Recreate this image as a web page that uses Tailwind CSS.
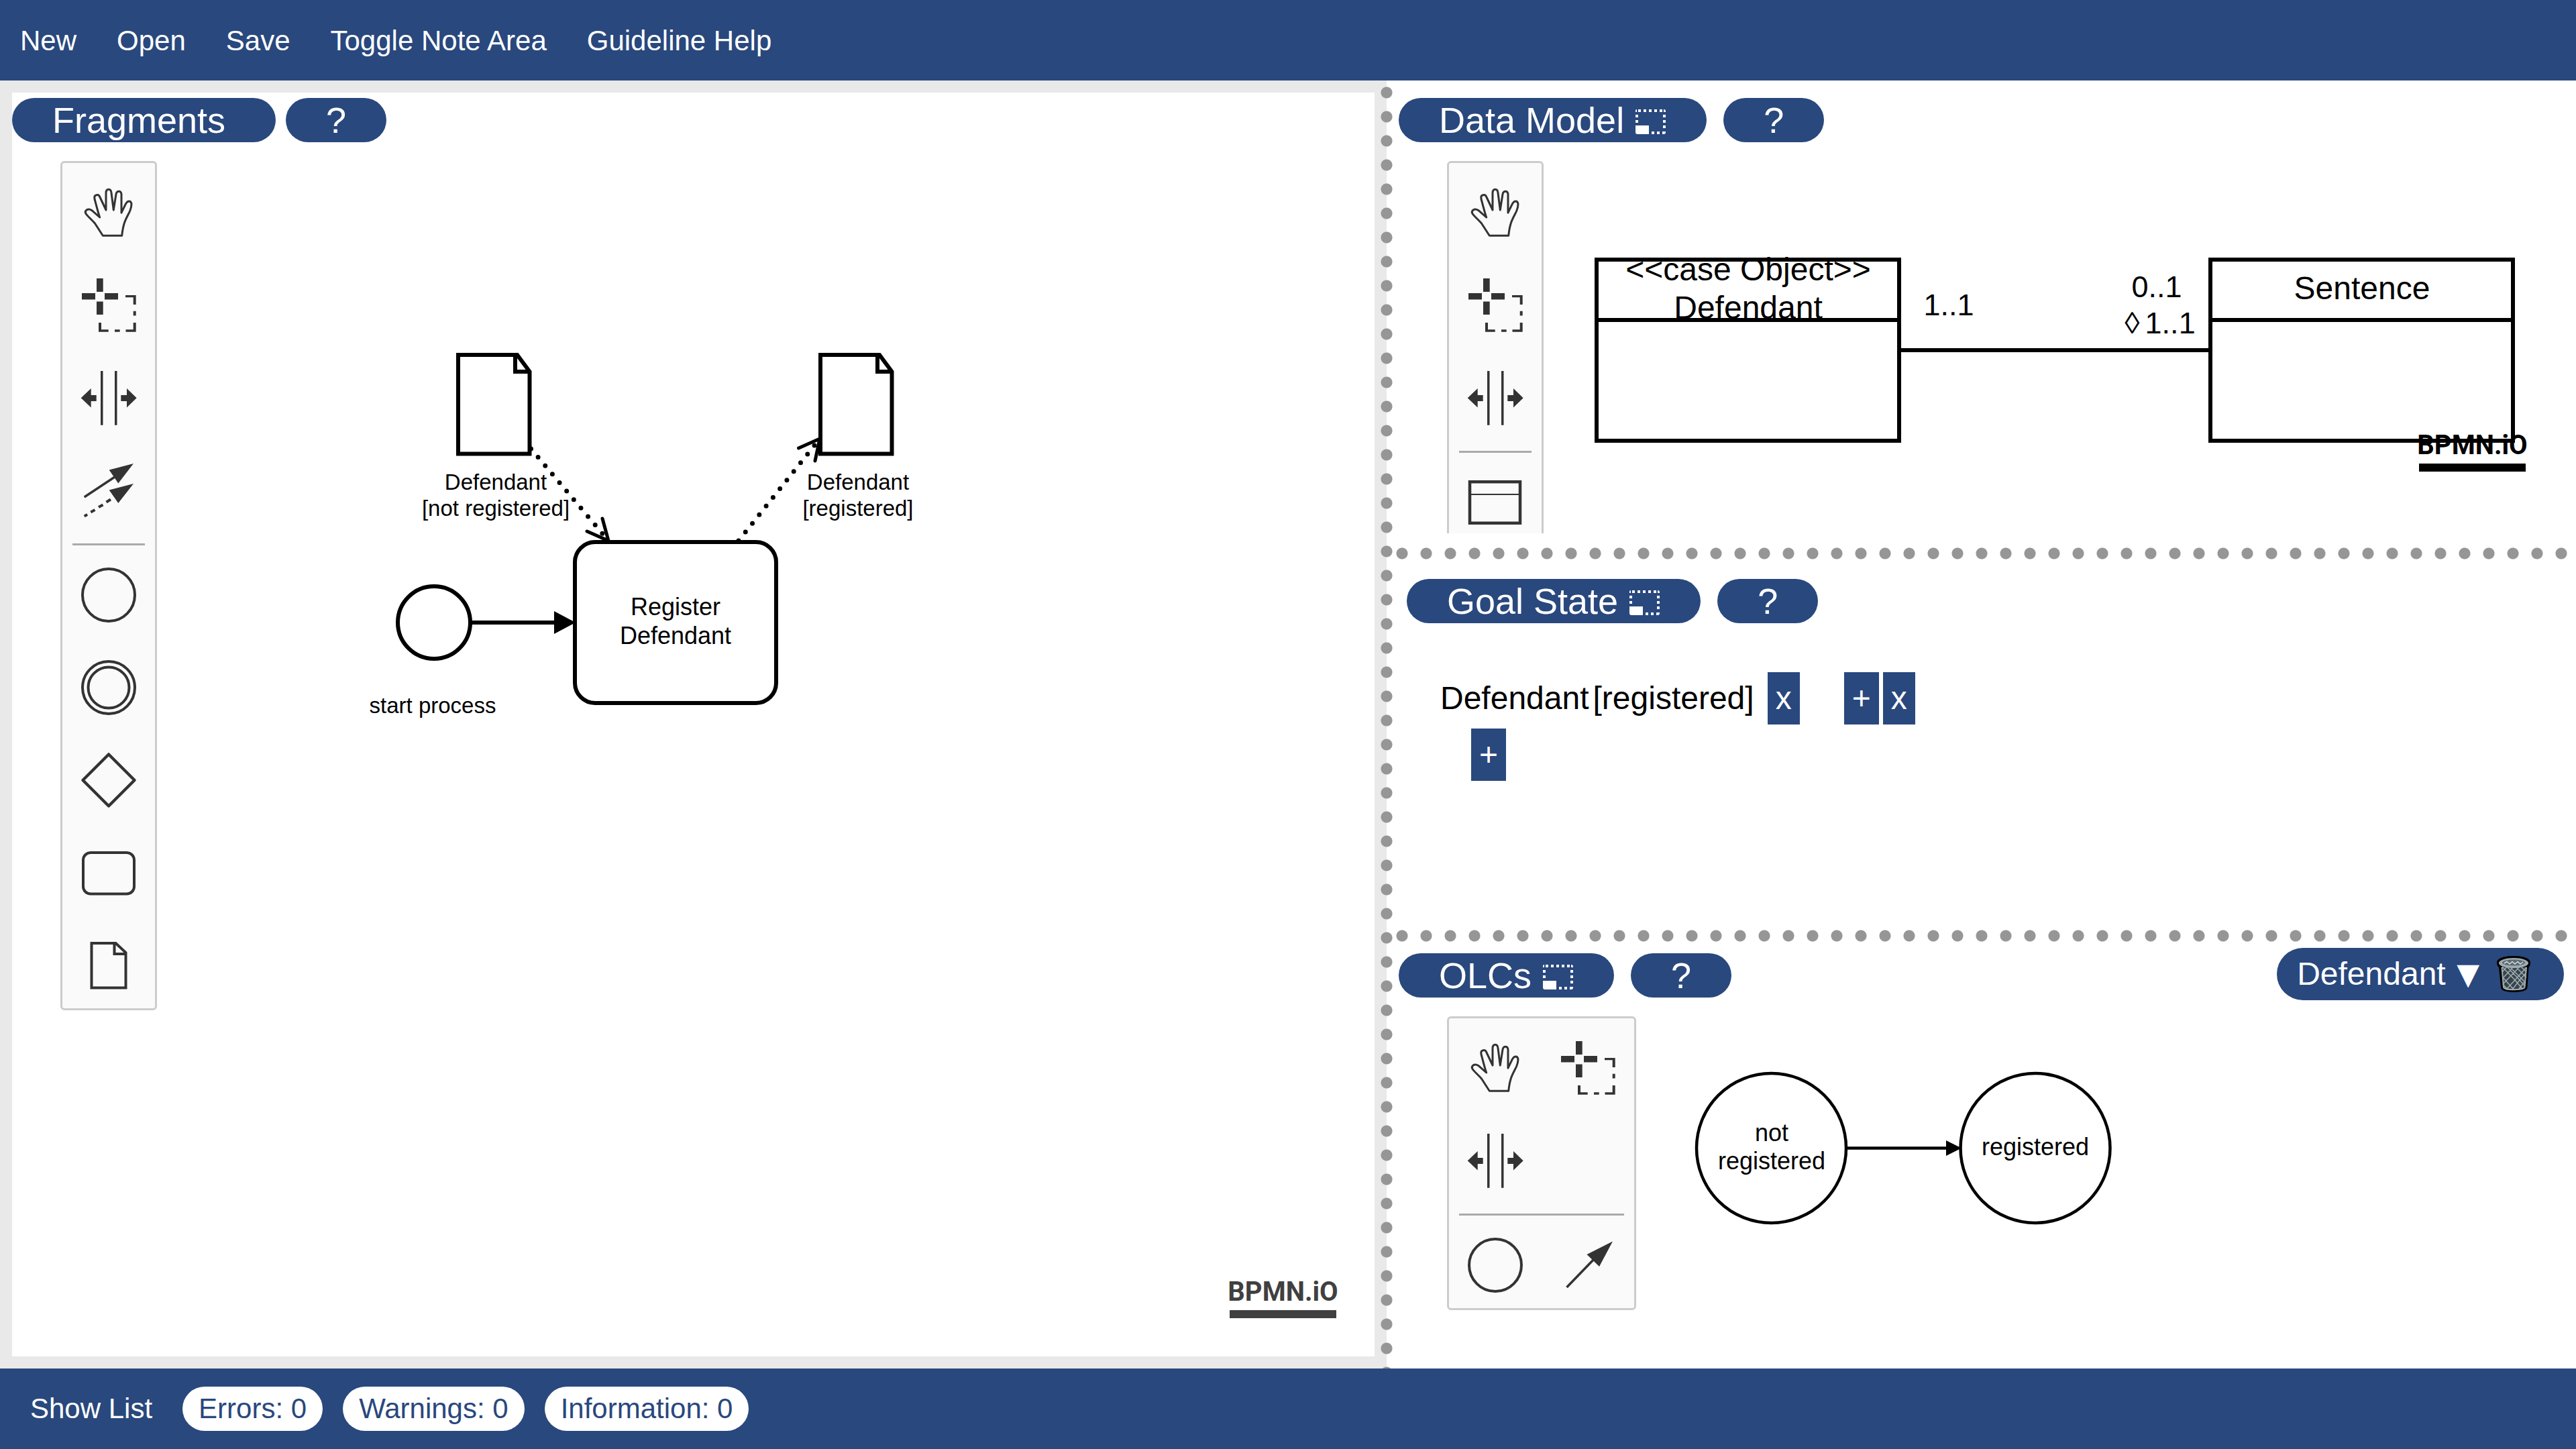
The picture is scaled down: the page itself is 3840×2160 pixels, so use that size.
<!DOCTYPE html>
<html lang="en">
<head>
<meta charset="utf-8">
<meta name="viewport" content="width=device-width, initial-scale=1">
<title>Fragments Modeler</title>
<script src="https://cdn.jsdelivr.net/npm/@tailwindcss/browser@4"></script>
</head>
<body class="min-h-screen flex flex-col bg-white text-black font-['Liberation_Sans',Arial,sans-serif] text-[48px]">

<!-- Shared icon shapes -->
<svg class="hidden" aria-hidden="true">
  <defs>
    <symbol id="i-hand" viewBox="0 0 138 138">
      <path fill="none" stroke="#333" stroke-width="3" stroke-linejoin="round" d="M60.3 108.3H88.7C89.5 101 90.5 95 92.5 89C95 82 98.5 76.500 100.700 71.500C102.500 67 103 64 103 61.200C102.500 55.500 97 55.500 94.300 61.200L88 74.200V46.500C87.500 40.800 81 40.800 80 46.500L76.300 70L73 44.500C72.500 37.500 65.300 37.500 65 44.500V70L56 51C54 45.500 46.500 47 48 53.500C49.500 59 53 73 55.700 81L43.700 70.400C37.500 66.500 32.500 71.500 35 75.500C38 80 44 84.500 48.500 90Z"/>
    </symbol>
    <symbol id="i-lasso" viewBox="0 0 138 138">
      <path fill="#333" d="M29 56H49V65.500H29ZM63 56H83V65.500H63ZM51 34H60.700V54H51ZM51 68.400H60.700V88H51ZM94 59H109.700V73H105.700V62.300H94ZM105.700 82.700H109.700V89.500H105.700ZM105.700 100H109.700V113.800H94.500V110.300H105.700ZM78 110.300H85.700V113.800H78ZM54 100H58V110.300H68.700V113.800H54Z"/>
    </symbol>
    <symbol id="i-space" viewBox="0 0 138 138">
      <path fill="#333" d="M57 34H60.500V114.700H57ZM78 34H81.500V114.700H78ZM27.700 74.300L42.700 60V70H50.700V79H42.700V88.600ZM110.700 74.300L96 60V70H87.300V79H96V88.600Z"/>
    </symbol>
    <symbol id="i-connect" viewBox="0 0 138 138">
      <path fill="none" stroke="#333" stroke-width="3.500" d="M32.700 84L78 54"/>
      <path fill="none" stroke="#333" stroke-width="4" d="M32.700 112.500L37.200 110M42.300 106.500L48.500 103M54 99L60.500 95.500M65.500 91.500L72 87.500"/>
      <path fill="#333" d="M69.700 43.600L106 34L83.300 63.400ZM69.700 73.600L106 64L83.300 93Z"/>
    </symbol>
    <symbol id="i-circle" viewBox="0 0 138 138">
      <circle cx="69" cy="74" r="39" fill="none" stroke="#333" stroke-width="4"/>
    </symbol>
    <symbol id="i-double" viewBox="0 0 138 138">
      <g fill="none" stroke="#333" stroke-width="4"><circle cx="69" cy="74" r="39"/><circle cx="69" cy="74" r="30.500"/></g>
    </symbol>
    <symbol id="i-gateway" viewBox="0 0 138 138">
      <path fill="none" stroke="#333" stroke-width="4.500" stroke-linejoin="round" d="M69 35.500L107.500 74L69 112.500L30.500 74Z"/>
    </symbol>
    <symbol id="i-task" viewBox="0 0 138 138">
      <rect x="31" y="44" width="76" height="61.500" rx="11" fill="none" stroke="#333" stroke-width="4"/>
    </symbol>
    <symbol id="i-data" viewBox="0 0 138 138">
      <path fill="none" stroke="#333" stroke-width="4" d="M43.500 41H79.500L94.500 55V107.500H43.500ZM77.500 41V57H94.500"/>
    </symbol>
    <symbol id="i-class" viewBox="0 0 138 138">
      <path fill="none" stroke="#333" stroke-width="4.500" d="M31 43.300H106V104.700H31Z"/>
      <path stroke="#333" stroke-width="2" d="M31 62H106"/>
    </symbol>
    <symbol id="i-arrow" viewBox="0 0 138 138">
      <path stroke="#333" stroke-width="3.500" d="M37.500 107L80 63"/>
      <path fill="#333" d="M67.500 58L106 38.400L86 76Z"/>
    </symbol>
    <symbol id="i-resize" viewBox="0 0 48 37">
      <path fill="none" stroke="#fff" stroke-width="4" stroke-dasharray="4 4" d="M6 2H44"/>
      <path fill="#fff" d="M2 2Q2 0 4 0V4H2ZM44 0Q47 0 47 3V4H44ZM2 8H6V12H2ZM2 16H6V20H2ZM43 8H47V12H43ZM43 16H47V20H43ZM43 24H47V28H43ZM2 24H22V37H5Q2 37 2 34ZM26 33H30V37H26ZM34 33H38V37H34ZM42 33H47V34Q47 37 44 37H42Z"/>
    </symbol>
  </defs>
</svg>

<header class="h-[120px] shrink-0 bg-[#29487d] text-white text-[42px]">
  <nav class="h-full flex items-center">
    <button class="px-[30px]">New</button>
    <button class="px-[30px]">Open</button>
    <button class="px-[30px]">Save</button>
    <button class="px-[30px]">Toggle Note Area</button>
    <button class="px-[30px]">Guideline Help</button>
  </nav>
</header>

<main class="flex-1 grid grid-cols-[2067fr_1773fr]">
  <!-- Fragments -->
  <section class="min-w-0 bg-[#e9e9e9] p-[18px] flex">
    <div class="relative flex-1 bg-white pt-2 flex flex-col items-start">
      <svg class="absolute inset-0 size-full" role="img" aria-label="Fragments diagram">
        <g transform="translate(-18 -138)" fill="none" stroke="#000" stroke-width="6">
          <path d="M683 529H771L789.500 554V676.500H683ZM768 529V554H789.500"/>
          <path d="M1223 529H1311L1329.500 554V676.500H1223ZM1308 529V554H1329.500"/>
          <g stroke-linecap="round">
            <path stroke-width="7" stroke-dasharray="0 16.500" d="M791.500 669L907 806"/>
            <path stroke-width="7" stroke-dasharray="0 16.500" d="M1101 806L1222 654"/>
            <path stroke-width="5" d="M898 773L907 806L875 792M1190.500 668L1222 654L1215 687"/>
          </g>
          <circle cx="647" cy="928" r="54" fill="#fff"/>
          <rect x="857" y="808" width="300" height="240" rx="30" fill="#fff"/>
          <path d="M702 928H830"/>
          <path fill="#000" stroke="none" d="M826 911L858 928L826 945Z"/>
          <g fill="#000" stroke="none" text-anchor="middle" font-size="33">
            <text x="739" y="730">Defendant</text>
            <text x="739" y="769">[not registered]</text>
            <text x="1279" y="730">Defendant</text>
            <text x="1279" y="769">[registered]</text>
            <text x="645" y="1063">start process</text>
            <text x="1007" y="917" font-size="36">Register</text>
            <text x="1007" y="960" font-size="36">Defendant</text>
          </g>
        </g>
      </svg>
      <div class="relative flex gap-[15px] text-[54px] leading-[66px] text-white">
        <h2 class="h-[66px] rounded-full bg-[#29487d] pl-[60px] pr-[75px]">Fragments</h2>
        <button class="w-[150px] h-[66px] rounded-full bg-[#29487d]">?</button>
      </div>
      <div class="relative mt-7 ml-[72px] w-36 rounded-md border-3 border-[#ccc] bg-[#fafafa]">
        <button class="block size-[138px]" aria-label="Hand tool"><svg class="size-full"><use href="#i-hand"/></svg></button>
        <button class="block size-[138px]" aria-label="Lasso tool"><svg class="size-full"><use href="#i-lasso"/></svg></button>
        <button class="block size-[138px]" aria-label="Space tool"><svg class="size-full"><use href="#i-space"/></svg></button>
        <button class="block size-[138px]" aria-label="Connect tool"><svg class="size-full"><use href="#i-connect"/></svg></button>
        <hr class="mx-[15px] h-[18px] border-t-0 border-b-3 border-[#aaa]">
        <button class="block size-[138px]" aria-label="Create start event"><svg class="size-full"><use href="#i-circle"/></svg></button>
        <button class="block size-[138px]" aria-label="Create intermediate event"><svg class="size-full"><use href="#i-double"/></svg></button>
        <button class="block size-[138px]" aria-label="Create gateway"><svg class="size-full"><use href="#i-gateway"/></svg></button>
        <button class="block size-[138px]" aria-label="Create task"><svg class="size-full"><use href="#i-task"/></svg></button>
        <button class="block size-[138px]" aria-label="Create data object"><svg class="size-full"><use href="#i-data"/></svg></button>
      </div>
      <a href="#bpmn" class="absolute right-[57px] bottom-[57px] w-[159px] h-[63px] flex flex-col justify-between items-center text-[#404040] font-bold font-['Roboto','Liberation_Sans',sans-serif] text-[40px] leading-[48px] after:block after:w-full after:h-3 after:bg-[#404040] after:shrink-0">BPMN.iO</a>
    </div>
  </section>

  <!-- Side panels -->
  <div class="relative min-w-0 grid grid-rows-[696fr_18px_552fr_18px_636fr]">
    <div class="absolute inset-y-0 -left-[9px] w-[18px] bg-[radial-gradient(circle_at_center,#969696_8px,transparent_9px)] bg-[length:18px_36px]"></div>

    <!-- Data model -->
    <section class="relative min-h-0 pl-[18px] pt-[26px]">
      <svg class="absolute inset-0 size-full" role="img" aria-label="Data model diagram">
        <g transform="translate(-2067 -120)" fill="none" stroke="#000" stroke-width="6">
          <path d="M2380 387H2831V657H2380ZM2380 477H2831M3295 387H3746V657H3295ZM3295 477H3746M2831 522H3295"/>
          <g fill="#000" stroke="none" text-anchor="middle" font-size="48">
            <text x="2606" y="418">&lt;&lt;case Object&gt;&gt;</text>
            <text x="2606" y="475">Defendant</text>
            <text x="3521" y="446">Sentence</text>
            <text x="2905" y="470" font-size="45">1..1</text>
            <text x="3215" y="443" font-size="45">0..1</text>
            <text x="3220" y="497" font-size="45">◊<tspan dx="8">1..1</tspan></text>
          </g>
        </g>
      </svg>
      <div class="relative flex gap-[25px] text-[54px] leading-[66px] text-white">
        <button class="h-[66px] px-[60px] rounded-full bg-[#29487d] flex items-center gap-[15px]">Data Model <svg class="w-12 h-[37px] mt-1"><use href="#i-resize"/></svg></button>
        <button class="w-[150px] h-[66px] rounded-full bg-[#29487d]">?</button>
      </div>
      <div class="relative mt-7 ml-[72px] h-[555px] overflow-hidden w-36">
        <div class="rounded-md border-3 border-[#ccc] bg-[#fafafa]">
          <button class="block size-[138px]" aria-label="Hand tool"><svg class="size-full"><use href="#i-hand"/></svg></button>
          <button class="block size-[138px]" aria-label="Lasso tool"><svg class="size-full"><use href="#i-lasso"/></svg></button>
          <button class="block size-[138px]" aria-label="Space tool"><svg class="size-full"><use href="#i-space"/></svg></button>
          <hr class="mx-[15px] h-[18px] border-t-0 border-b-3 border-[#aaa]">
          <button class="block size-[138px]" aria-label="Create class"><svg class="size-full"><use href="#i-class"/></svg></button>
        </div>
      </div>
      <a href="#bpmn" class="absolute right-[75px] bottom-[113px] w-[159px] h-[63px] flex flex-col justify-between items-center text-black font-bold font-['Roboto','Liberation_Sans',sans-serif] text-[40px] leading-[48px] after:block after:w-full after:h-3 after:bg-black after:shrink-0">BPMN.iO</a>
    </section>

    <div class="ml-[5px] bg-[radial-gradient(circle_at_center,#969696_8px,transparent_9px)] bg-[length:36px_18px]"></div>

    <!-- Goal state -->
    <section class="min-h-0 pl-[30px] pt-[29px]">
      <div class="flex gap-[25px] text-[54px] leading-[66px] text-white">
        <button class="h-[66px] px-[60px] rounded-full bg-[#29487d] flex items-center gap-[15px]">Goal State <svg class="w-12 h-[37px] mt-1"><use href="#i-resize"/></svg></button>
        <button class="w-[150px] h-[66px] rounded-full bg-[#29487d]">?</button>
      </div>
      <div class="mt-[73px] ml-[50px] flex items-center leading-[78px]">
        <span>Defendant</span>
        <span class="ml-1.5">[registered]</span>
        <button class="ml-5 px-3 bg-[#29487d] text-white">x</button>
        <button class="ml-[66px] px-3 bg-[#29487d] text-white">+</button>
        <button class="ml-1.5 px-3 bg-[#29487d] text-white">x</button>
      </div>
      <button class="mt-1.5 ml-24 block px-3 leading-[78px] bg-[#29487d] text-white">+</button>
    </section>

    <div class="ml-[5px] bg-[radial-gradient(circle_at_center,#969696_8px,transparent_9px)] bg-[length:36px_18px]"></div>

    <!-- Object life cycles -->
    <section class="relative min-h-0 px-[18px] pt-[9px]">
      <svg class="absolute inset-0 size-full" role="img" aria-label="Object life cycle diagram">
        <g transform="translate(-2067 -1404)" fill="none" stroke="#000" stroke-width="4.500">
          <circle cx="2640.500" cy="1711.500" r="111.500"/>
          <circle cx="3034" cy="1711.500" r="111.500"/>
          <path d="M2752 1711.500H2904"/>
          <path fill="#000" stroke="none" d="M2901 1700L2924 1711.500L2901 1723Z"/>
          <g fill="#000" stroke="none" text-anchor="middle" font-size="36">
            <text x="2641" y="1701">not</text>
            <text x="2641" y="1743">registered</text>
            <text x="3034" y="1722">registered</text>
          </g>
        </g>
      </svg>
      <div class="relative flex gap-[25px] items-start text-[54px] leading-[66px] text-white">
        <button class="mt-2 h-[66px] px-[60px] rounded-full bg-[#29487d] flex items-center gap-[15px]">OLCs <svg class="w-12 h-[37px] mt-1"><use href="#i-resize"/></svg></button>
        <button class="mt-2 w-[150px] h-[66px] rounded-full bg-[#29487d]">?</button>
        <div class="ml-auto h-[78px] pl-[30px] pr-[50px] rounded-full bg-[#29487d] flex items-center text-[48px]">
          <select class="appearance-none leading-[78px] bg-transparent" aria-label="Object life cycle"><option>Defendant</option></select>
          <span class="ml-4 font-['DejaVu_Sans',sans-serif] text-[44px]" aria-hidden="true">▼</span>
          <button class="ml-[26px]" aria-label="Delete class">
            <svg class="block w-[50px] h-[54px]" viewBox="0 0 50 54">
              <path fill="#000" d="M0 10C0 3 12 0 25 0S50 3 50 10C50 13.500 49 15.500 47.500 17L45.500 47C45 52 36 54 25.500 54S6.500 52 6 47L3 17C1 15.500 0 13 0 10Z"/>
              <path fill="#37434b" d="M7 16L10 47C11 52 41 52 41.500 47L44.500 16Z"/>
              <path fill="none" stroke="#9fadb2" stroke-width="1.500" d="M8 24L15 16L34 36L42 45M8 16L27 36L38 49M9 32L25 50M9 42L16 50M18 15L43 40M28 16L44 32M36 16L44 24M44 17L27 36L14 50M43 26L34 36L23 50M42 38L32 50M34 16L9 42M25 16L9 33"/>
              <path fill="none" stroke="#9fadb2" stroke-width="2" d="M7.500 17L10 46.500C11 51.500 41 51.500 41.500 46.500L44 17"/>
              <ellipse cx="25" cy="10.500" rx="22" ry="7.500" fill="#9fadb2"/>
              <ellipse cx="25" cy="10" rx="17" ry="4.500" fill="#5d6b72"/>
              <path fill="none" stroke="#d5dcde" stroke-width="1.500" d="M11 11L15 8.500L19 12L23 8.500L27 12L31 8.500L35 12L39 9"/>
            </svg>
          </button>
        </div>
      </div>
      <div class="relative mt-6 ml-[72px] w-[282px] rounded-md border-3 border-[#ccc] bg-[#fafafa]">
        <div class="flex flex-wrap">
          <button class="block size-[138px]" aria-label="Hand tool"><svg class="size-full"><use href="#i-hand"/></svg></button>
          <button class="block size-[138px]" aria-label="Lasso tool"><svg class="size-full"><use href="#i-lasso"/></svg></button>
          <button class="block size-[138px]" aria-label="Space tool"><svg class="size-full"><use href="#i-space"/></svg></button>
        </div>
        <hr class="mx-[15px] h-[18px] border-t-0 border-b-3 border-[#aaa]">
        <div class="flex">
          <button class="block size-[138px]" aria-label="Create state"><svg class="size-full"><use href="#i-circle"/></svg></button>
          <button class="block size-[138px]" aria-label="Create transition"><svg class="size-full"><use href="#i-arrow"/></svg></button>
        </div>
      </div>
    </section>
  </div>
</main>

<footer class="relative h-[120px] shrink-0 bg-[#29487d] text-white text-[42px] leading-[66px] flex items-center gap-[30px] pl-[45px]">
  <button class="mr-[15px]">Show List</button>
  <button class="px-6 rounded-full bg-white text-[#29487d]">Errors: 0</button>
  <button class="px-6 rounded-full bg-white text-[#29487d]">Warnings: 0</button>
  <button class="px-6 rounded-full bg-white text-[#29487d]">Information: 0</button>
</footer>
</body>
</html>
